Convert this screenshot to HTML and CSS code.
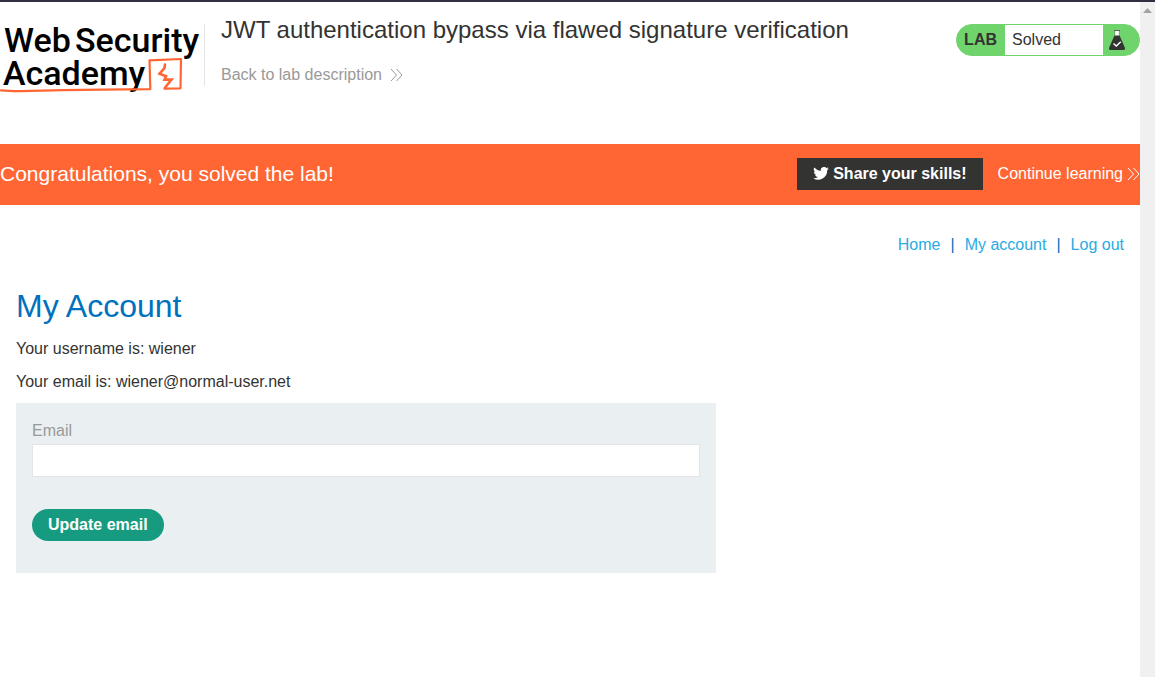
FILE: index.html
```html
<!DOCTYPE html>
<html lang="en">
<head>
<meta charset="utf-8">
<title>JWT authentication bypass via flawed signature verification</title>
<link rel="stylesheet" href="styles.css">
</head>
<body>
<div class="window">
  <div class="page">
    <header class="lab-header">
      <a class="logo" href="#" aria-label="Web Security Academy">
        <svg width="204" height="80" viewBox="0 16 204 80">
          <g class="logo-text">
            <text x="4" y="52">Web</text>
            <text x="75" y="52">Security</text>
            <text x="3" y="85">Academy</text>
          </g>
          <g fill="none" stroke="#ff6633" stroke-width="2.2" stroke-linejoin="round" stroke-linecap="round">
            <path d="M1 90.300C16 92 35 90.700 62 90.200S125 89.300 150.300 89.200L149.500 60.300L181 59L180.500 88.300L164.500 88.600"/>
            <path stroke-width="2.600" stroke-linejoin="miter" d="M165 64.500L164.500 68L159.500 73.800L166 76.200L164.500 79.600L171.500 79.600L164.800 88"/>
          </g>
        </svg>
      </a>
      <div class="title-block">
        <h2 class="lab-title">JWT authentication bypass via flawed signature verification</h2>
        <a class="back-link" href="#">Back to lab description
          <svg class="chevrons" width="13" height="14" viewBox="0 0 13 14"><path d="M1 1L6.500 7L1 13M6.500 1L12 7L6.500 13"/></svg>
        </a>
      </div>
      <div class="lab-status">
        <span class="status-label">LAB</span>
        <span class="status-text">Solved</span>
        <span class="status-icon">
          <svg width="16" height="20" viewBox="0 0 16 20">
            <path d="M5 .6H11" stroke="#5c6658" stroke-width="1.200"/>
            <path d="M6 1H10V6H6Z" fill="#fff"/>
            <path d="M5.700 1V6M10.300 1V6" stroke="#6a9c62" stroke-width=".7"/>
            <path d="M5.500 5.500H10.500L16 18Q16.200 20 14.500 20H1.500Q-.2 20 0 18Z" fill="#333332"/>
            <path d="M4.500 13.500L7.300 16L11.800 11.800" fill="none" stroke="#fff" stroke-width="1.400"/>
          </svg>
        </span>
      </div>
    </header>

    <section class="banner">
      <p class="banner-text">Congratulations, you solved the lab!</p>
      <button class="share" type="button">
        <svg width="16" height="13" viewBox="0 0 24 20"><path fill="#fff" d="M24 2.400a10 10 0 0 1-2.800.8A5 5 0 0 0 23.300.4a10 10 0 0 1-3.100 1.200A4.900 4.900 0 0 0 11.800 6 14 14 0 0 1 1.700.9 4.900 4.900 0 0 0 3.200 7.500 5 5 0 0 1 1 6.900a4.900 4.900 0 0 0 3.900 4.900 5 5 0 0 1-2.200.1 4.900 4.900 0 0 0 4.600 3.400A10 10 0 0 1 0 17.300 14 14 0 0 0 21.500 4.900 10 10 0 0 0 24 2.400Z"/></svg>
        Share your skills!
      </button>
      <a class="continue-link" href="#">Continue learning
        <svg class="chevrons" width="13" height="14" viewBox="0 0 13 14"><path d="M1 1L6.500 7L1 13M6.500 1L12 7L6.500 13"/></svg>
      </a>
    </section>

    <main class="content">
      <nav class="top-links">
        <a href="#">Home</a><span>|</span><a href="#">My account</a><span>|</span><a href="#">Log out</a>
      </nav>
      <h1 class="heading">My Account</h1>
      <p class="detail">Your username is: wiener</p>
      <p class="detail">Your email is: wiener@normal-user.net</p>
      <form class="email-form">
        <label for="email">Email</label>
        <input id="email" type="email" name="email">
        <button class="update" type="submit">Update email</button>
      </form>
    </main>
  </div>
  <div class="scrollbar">
    <svg width="9" height="5" viewBox="0 0 9 5"><path d="M4.500 0L9 5H0Z" fill="#a3a3a3"/></svg>
  </div>
</div>
</body>
</html>
```
FILE: styles.css
```css
* {
  box-sizing: border-box;
}

body {
  margin: 0;
  color: #333332;
  background: #fff;
  font-family: "Liberation Sans", Arial, sans-serif;
  font-size: 16px;
  line-height: 20px;
}

h1, h2, p {
  margin: 0;
  font-weight: 400;
}

a {
  text-decoration: none;
}

button {
  border: 0;
  color: #fff;
  font: inherit;
  font-weight: 700;
}

svg {
  flex: none;
  display: block;
}

.window {
  display: flex;
  min-height: 100vh;
  border-top: 2px solid #2f2f41;
}

.page {
  flex: 1;
  min-width: 0;
}

.scrollbar {
  display: flex;
  justify-content: center;
  width: 15px;
  padding-top: 6px;
  background: #f0f0f0;
}

.lab-header {
  display: flex;
  align-items: flex-start;
  min-height: 142px;
  padding-top: 14px;
}

.logo-text {
  font-family: Roboto, sans-serif;
  font-size: 34px;
  font-weight: 500;
  fill: #000;
}

.title-block {
  flex: 1;
  position: relative;
  padding-left: 17px;
}

.title-block::before {
  content: "";
  position: absolute;
  left: 0;
  top: 8px;
  width: 1px;
  height: 62px;
  background: #e4e4e4;
}

.lab-title {
  font-size: 24px;
  line-height: 28px;
}

.back-link {
  display: flex;
  align-items: center;
  gap: 8px;
  margin-top: 21px;
  color: #999;
}

.chevrons path {
  fill: none;
  stroke: currentColor;
  stroke-width: 1;
}

.lab-status {
  display: flex;
  height: 32px;
  margin-top: 8px;
  border: 1px solid #70d46c;
  border-radius: 16px;
  background: #70d46c;
  overflow: hidden;
  line-height: 30px;
}

.status-label {
  padding: 0 8px 0 7px;
  font-weight: 700;
}

.status-text {
  width: 98px;
  padding-left: 7px;
  background: #fff;
}

.status-icon {
  width: 36px;
  padding: 5px 6px;
}

.banner {
  display: flex;
  align-items: center;
  min-height: 61px;
  padding-bottom: 2px;
  color: #fff;
  background: #ff6633;
}

.banner-text {
  flex: 1;
  font-size: 21px;
}

.share {
  display: flex;
  align-items: center;
  gap: 4px;
  height: 32px;
  padding: 0 16px;
  background: #333332;
}

.continue-link {
  display: flex;
  align-items: center;
  gap: 4px;
  margin-left: 15px;
  color: #fff;
}

.content {
  padding: 30px 16px;
}

.top-links {
  display: flex;
  justify-content: flex-end;
  gap: 10px;
  color: #0071bc;
}

.top-links a {
  color: #29abe2;
}

.heading {
  margin-top: 31px;
  color: #0071bc;
  font-size: 32px;
  line-height: 40px;
}

.detail {
  margin-top: 13px;
}

.email-form {
  display: flex;
  flex-direction: column;
  align-items: flex-start;
  max-width: 700px;
  margin-top: 11px;
  padding: 18px 16px 32px;
  background: #eaeff2;
}

.email-form label {
  color: #999;
}

.email-form input {
  width: 100%;
  height: 33px;
  margin-top: 3px;
  padding: 0 8px;
  border: 1px solid #e4e4e4;
  background: #fff;
  font: inherit;
}

.update {
  height: 32px;
  margin-top: 32px;
  padding: 0 16px;
  border-radius: 16px;
  background: #179b80;
}
```
